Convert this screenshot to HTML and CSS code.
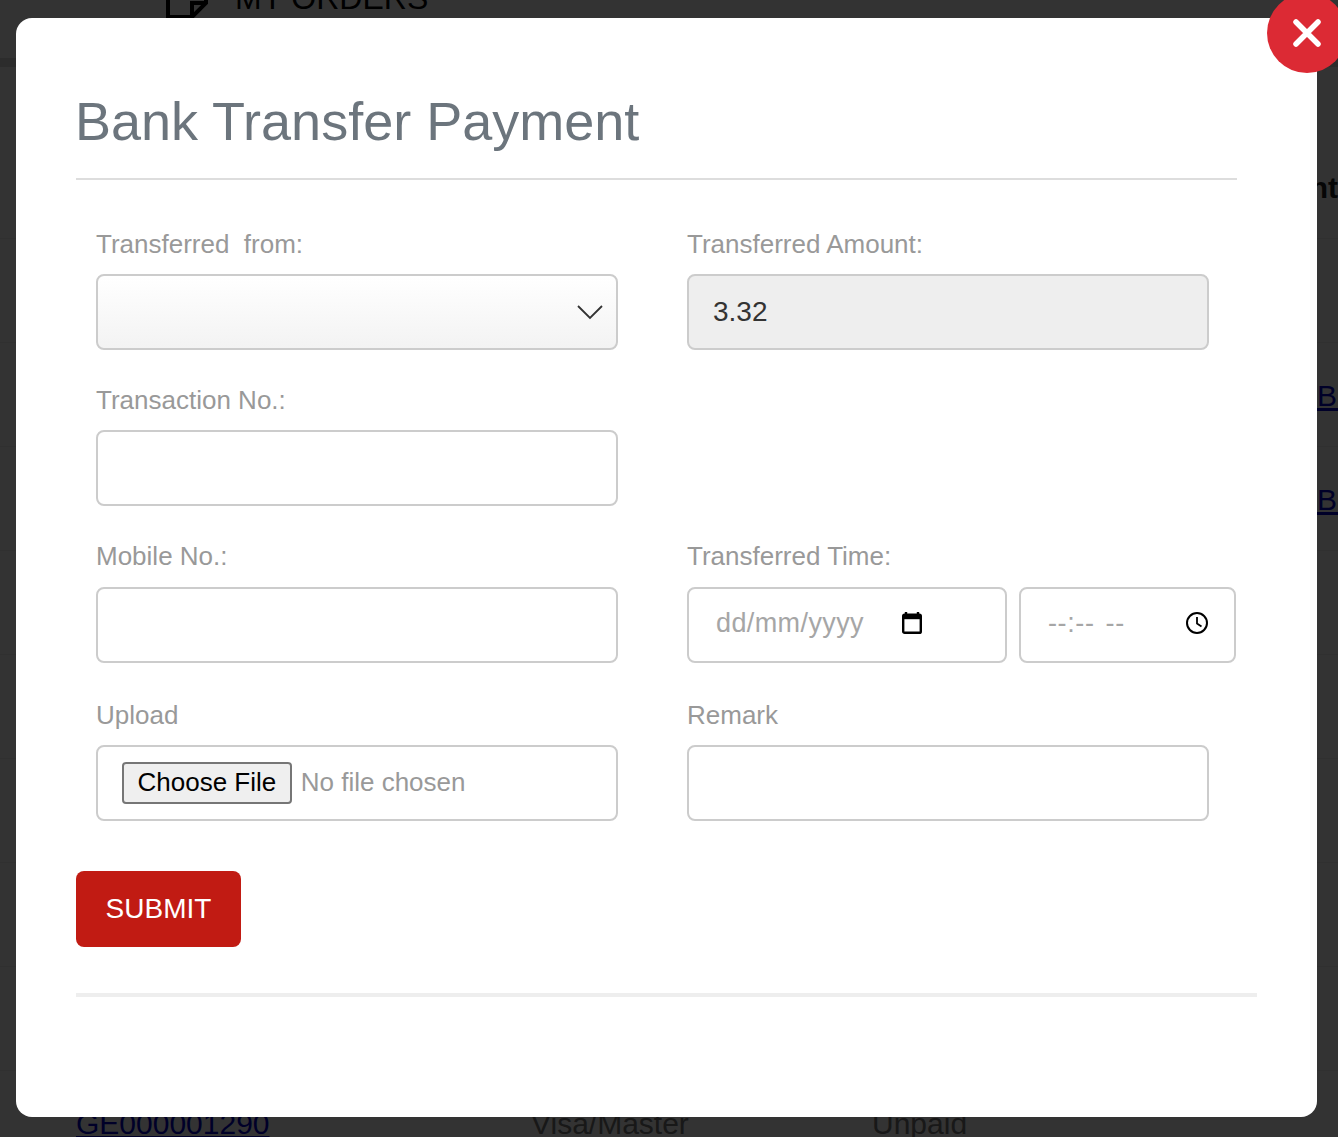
FILE: index.html
```html
<!DOCTYPE html>
<html lang="en">
<head>
  <meta charset="UTF-8">
  <meta name="viewport" content="width=device-width, initial-scale=1.0">
  <title>Bank Transfer Payment</title>
  <link rel="stylesheet" href="styles.css">
</head>
<body>

<!-- page behind the popup -->
<div class="page">
  <nav class="topnav">
    <span class="nav-item nav-first">ACCOUNT</span>
    <span class="nav-item">
      <svg class="nav-icon" viewBox="0 0 44 44" width="44" height="44">
        <path d="M3 3V41H27L41 27V3" fill="none" stroke="currentColor" stroke-width="4"/>
        <path d="M27 41V27H41" fill="none" stroke="currentColor" stroke-width="4"/>
      </svg>
      MY ORDERS
    </span>
  </nav>
  <div class="nav-band"></div>

  <div class="orders">
    <div class="order-row order-head">
      <span>Order No.</span><span>Payment Type</span><span>Status</span><span class="head-last">Payment</span>
    </div>
    <div class="order-row"></div>
    <div class="order-row"><span></span><span></span><span></span><a href="#">Bank Transfer</a></div>
    <div class="order-row"><span></span><span></span><span></span><a href="#">Bank Transfer</a></div>
    <div class="order-row"></div>
    <div class="order-row"></div>
    <div class="order-row"></div>
    <div class="order-row"></div>
    <div class="order-row"></div>
    <div class="order-row"><a href="#">GE000001290</a><span>Visa/Master</span><span>Unpaid</span></div>
  </div>
</div>

<div class="overlay">
  <div class="modal">
    <button class="close-btn" type="button" aria-label="Close">
      <svg viewBox="0 0 30 30" width="30" height="30">
        <path d="M4 4L26 26M26 4L4 26" stroke="#fff" stroke-width="5.5" stroke-linecap="round"/>
      </svg>
    </button>

    <h1 class="modal-title">Bank Transfer Payment</h1>
    <hr class="title-line">

    <form class="pay-form">
      <div class="field">
        <label>Transferred&nbsp; from:</label>
        <div class="select-wrap">
          <select class="control select-control"><option></option></select>
          <svg class="chevron" viewBox="0 0 26 16" width="26" height="16">
            <path d="M1 2L13 14L25 2" fill="none" stroke="#333" stroke-width="1.8"/>
          </svg>
        </div>
      </div>
      <div class="field">
        <label>Transferred Amount:</label>
        <input class="control" type="text" value="3.32" disabled>
      </div>

      <div class="field">
        <label>Transaction No.:</label>
        <input class="control" type="text">
      </div>
      <div class="field"></div>

      <div class="field field-time">
        <label>Mobile No.:</label>
        <input class="control" type="text">
      </div>
      <div class="field field-time">
        <label>Transferred Time:</label>
        <div class="time-pair">
          <div class="picker picker-date">
            <input class="control picker-input" type="text" placeholder="dd/mm/yyyy">
            <svg class="picker-icon icon-date" viewBox="0 0 20 24" width="20" height="24">
              <path d="M4 1V5M16 1V5" stroke="#000" stroke-width="2.4"/>
              <rect x="1.2" y="3.6" width="17.6" height="18.2" rx="1.4" fill="none" stroke="#000" stroke-width="2.4"/>
              <rect x="1.2" y="3.6" width="17.6" height="4.6" fill="#000"/>
            </svg>
          </div>
          <div class="picker picker-time">
            <input class="control picker-input time-input" type="text" placeholder="--:-- --">
            <svg class="picker-icon icon-time" viewBox="0 0 24 24" width="24" height="24">
              <circle cx="12" cy="12" r="10" fill="none" stroke="#000" stroke-width="2"/>
              <path d="M12 6V12.5L16.5 15.5" fill="none" stroke="#000" stroke-width="1.8"/>
            </svg>
          </div>
        </div>
      </div>

      <div class="field">
        <label>Upload</label>
        <input class="control file-control" type="file">
      </div>
      <div class="field">
        <label>Remark</label>
        <input class="control" type="text">
      </div>
    </form>

    <button class="submit-btn" type="button">SUBMIT</button>
    <hr class="bottom-line">
  </div>
</div>

</body>
</html>
```

FILE: styles.css
```css
html, body {
  margin: 0;
  padding: 0;
  height: 100%;
  overflow: hidden;
}

body {
  font-family: "Liberation Sans", Arial, sans-serif;
  background-color: #fff;
}

/* Pagina de fondo */
.page {
  color: #777;
  font-size: 30px;
}

.topnav {
  display: flex;
  height: 82px;
  gap: 143px;
  margin-top: -24px;
  box-sizing: border-box;
  align-items: flex-start;
  white-space: nowrap;
  font-size: 32px;
}

.nav-item {
  display: flex;
  align-items: center;
  gap: 26px;
  line-height: 24px;
  color: #000;
}

.nav-first {
  margin-left: -100px;
  width: 122px;
  height: 24px;
  overflow: hidden;
  justify-content: flex-end;
}

.nav-icon {
  margin-top: 0;
}

.nav-band {
  height: 9px;
  background-color: #ddd;
}

.orders {
  margin-top: 68px;
}

.order-row {
  display: grid;
  grid-template-columns: 455px 341px 445px 1fr;
  height: 104px;
  box-sizing: border-box;
  padding-left: 76px;
  padding-top: 2px;
  border-bottom: 1px solid #eee;
  align-items: center;
  white-space: nowrap;
}

.order-row a {
  color: #0000c8;
}

.order-head {
  font-weight: bold;
  color: #222;
}

.head-last {
  margin-left: -104px;
}

/* Popup */
.overlay {
  position: fixed;
  top: 0;
  left: 0;
  right: 0;
  bottom: 0;
  background-color: rgba(0, 0, 0, 0.8);
}

.modal {
  position: relative;
  width: 1301px;
  height: 1099px;
  margin: 18px 0 0 16px;
  box-sizing: border-box;
  padding: 0 60px;
  background-color: #fff;
  border-radius: 16px;
}

.close-btn {
  position: absolute;
  top: -25px;
  right: -30px;
  width: 80px;
  height: 80px;
  padding: 0;
  display: flex;
  align-items: center;
  justify-content: center;
  border: none;
  border-radius: 50%;
  background-color: #dc2a34;
}

.modal-title {
  margin: 0 0 0 -1px;
  padding-top: 69px;
  font-size: 54px;
  line-height: 68px;
  font-weight: normal;
  color: #6c757d;
}

.title-line {
  width: 1161px;
  height: 2px;
  margin: 23px 0 49px;
  border: none;
  background-color: #ddd;
}

.pay-form {
  display: grid;
  grid-template-columns: 522px 522px;
  grid-template-rows: 121px 121px 122px 123px;
  column-gap: 69px;
  row-gap: 35px;
  padding-left: 20px;
}

.field {
  display: flex;
  flex-direction: column;
  justify-content: flex-end;
}

.field label {
  font-size: 26px;
  line-height: 30px;
  margin-bottom: 15px;
  color: #999;
}

.field-time label {
  margin-bottom: 16px;
}

.control {
  width: 100%;
  height: 76px;
  box-sizing: border-box;
  padding: 0 24px;
  border: 2px solid #ccc;
  border-radius: 8px;
  background-color: #fff;
  font-family: "Liberation Sans", Arial, sans-serif;
  font-size: 28px;
  color: #333;
  outline: none;
}

.control:disabled {
  background-color: #eee;
  color: #333;
  opacity: 1;
}

.select-wrap,
.picker {
  position: relative;
}

.select-control {
  appearance: none;
  background-image: linear-gradient(#fff, #f3f3f3);
}

.chevron {
  position: absolute;
  top: 30px;
  right: 15px;
  pointer-events: none;
}

.time-pair {
  display: flex;
  gap: 12px;
  width: 549px;
}

.picker-date {
  width: 320px;
}

.picker-time {
  width: 217px;
}

.picker-input {
  padding-left: 27px;
  padding-bottom: 3px;
  font-size: 27px;
  letter-spacing: 0.4px;
}

.time-input {
  word-spacing: 3px;
  letter-spacing: 0.6px;
}

.picker-input::placeholder {
  color: #a6a6a6;
  opacity: 1;
}

.picker-icon {
  position: absolute;
  top: 24px;
  pointer-events: none;
}

.icon-date {
  left: 215px;
}

.icon-time {
  top: 24px;
  left: 166px;
}

.file-control {
  padding: 0 24px 2px;
  line-height: 70px;
  font-size: 26px;
  color: #999;
}

.file-control::file-selector-button {
  height: 42px;
  margin-right: 9px;
  padding: 0 13.5px;
  border: 2px solid #767676;
  border-radius: 4px;
  background-color: #efefef;
  font-family: "Liberation Sans", Arial, sans-serif;
  font-size: 26px;
  color: #000;
}

.submit-btn {
  display: block;
  width: 165px;
  height: 76px;
  margin-top: 50px;
  padding: 0;
  border: none;
  border-radius: 8px;
  background-color: #c11b13;
  font-family: "Liberation Sans", Arial, sans-serif;
  font-size: 28px;
  color: #fff;
}

.bottom-line {
  height: 4px;
  margin: 46px 0 0;
  border: none;
  background-color: #eee;
}
```
